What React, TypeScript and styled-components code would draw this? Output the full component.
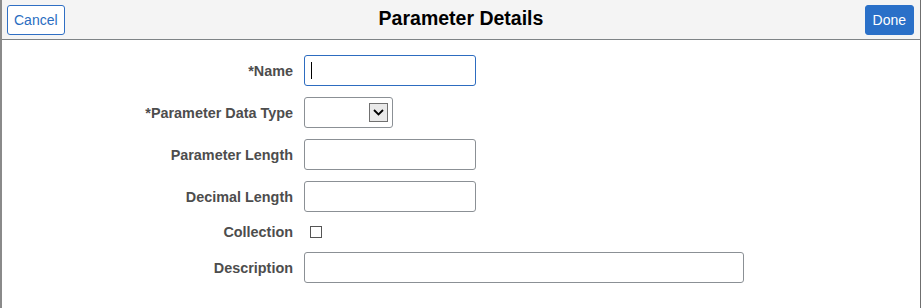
import React from 'react';
import styled, {createGlobalStyle} from 'styled-components';

const GlobalStyle = createGlobalStyle`
  html, body {
    margin: 0;
    padding: 0;
    background: #fff;
    font-family: "Liberation Sans", Arial, sans-serif;
  }
`;

const Page = styled.div`
  width: 921px;
  height: 308px;
  box-sizing: border-box;
  border-left: 2px solid #8a8a8a;
  border-right: 1px solid #6f6f6f;
  background: #fff;
`;

const Header = styled.header`
  height: 40px;
  box-sizing: border-box;
  display: flex;
  align-items: center;
  justify-content: space-between;
  padding: 0 6px 0 5px;
  background: #f4f4f4;
  border-bottom: 1px solid #7e8386;
  position: relative;
`;

const Title = styled.h1`
  position: absolute;
  left: 0;
  right: 0;
  top: 7px;
  margin: 0;
  text-align: center;
  font-size: 19.5px;
  font-weight: bold;
  color: #000;
  pointer-events: none;
`;

const HeaderButton = styled.button<{primary?: boolean}>`
  height: 30px;
  padding: 0 ${p => (p.primary ? '7px' : '6px')};
  font-family: inherit;
  font-size: 14px;
  border-radius: 3px;
  border: 1px solid ${p => (p.primary ? '#2a70c8' : '#2f6fc4')};
  background: ${p => (p.primary ? '#2a70c8' : '#fff')};
  color: ${p => (p.primary ? '#fff' : '#2a6dc1')};
`;

const Form = styled.div`
  display: grid;
  grid-template-columns: 291px auto;
  column-gap: 11px;
  row-gap: 11px;
  padding-top: 15px;
  align-items: center;
`;

const Label = styled.label`
  text-align: right;
  font-size: 14.4px;
  font-weight: bold;
  color: #4d4d4d;
  white-space: nowrap;
`;

const Input = styled.div<{width: number; focused?: boolean}>`
  width: ${p => p.width}px;
  height: 31px;
  box-sizing: border-box;
  border: 1px solid ${p => (p.focused ? '#2d6cc0' : '#8b9095')};
  border-radius: 3px;
  background: #fff;
  display: flex;
  align-items: center;
  padding-left: 6px;
`;

const Caret = styled.span`
  width: 1px;
  height: 17px;
  background: #000;
`;

const Select = styled.div`
  width: 89px;
  height: 31px;
  box-sizing: border-box;
  border: 1px solid #8b9095;
  border-radius: 3px;
  display: flex;
  align-items: center;
  justify-content: flex-end;
  padding-right: 4px;
`;

const ArrowBox = styled.span`
  width: 19px;
  height: 19px;
  box-sizing: border-box;
  border: 1px solid #707070;
  background: #e9e9e9;
  display: flex;
  align-items: center;
  justify-content: center;
`;

const CheckRow = styled.div`
  height: 18px;
  display: flex;
  align-items: center;
  padding-left: 6px;
`;

const Checkbox = styled.span`
  width: 12px;
  height: 12px;
  box-sizing: border-box;
  border: 1px solid #555;
  background: #fff;
`;

export default function App() {
  return (
    <>
      <GlobalStyle/>
      <Page>
        <Header>
          <HeaderButton>Cancel</HeaderButton>
          <Title>Parameter Details</Title>
          <HeaderButton primary>Done</HeaderButton>
        </Header>
        <Form>
          <Label>*Name</Label>
          <Input width={172} focused><Caret/></Input>

          <Label>*Parameter Data Type</Label>
          <Select>
            <ArrowBox>
              <svg width="11" height="7" viewBox="0 0 11 7">
                <path d="M1 1 L5.5 5.5 L10 1" fill="none" stroke="#000" strokeWidth="1.8"/>
              </svg>
            </ArrowBox>
          </Select>

          <Label>Parameter Length</Label>
          <Input width={172}/>

          <Label>Decimal Length</Label>
          <Input width={172}/>

          <Label>Collection</Label>
          <CheckRow><Checkbox/></CheckRow>

          <Label>Description</Label>
          <Input width={440}/>
        </Form>
      </Page>
    </>
  );
}
